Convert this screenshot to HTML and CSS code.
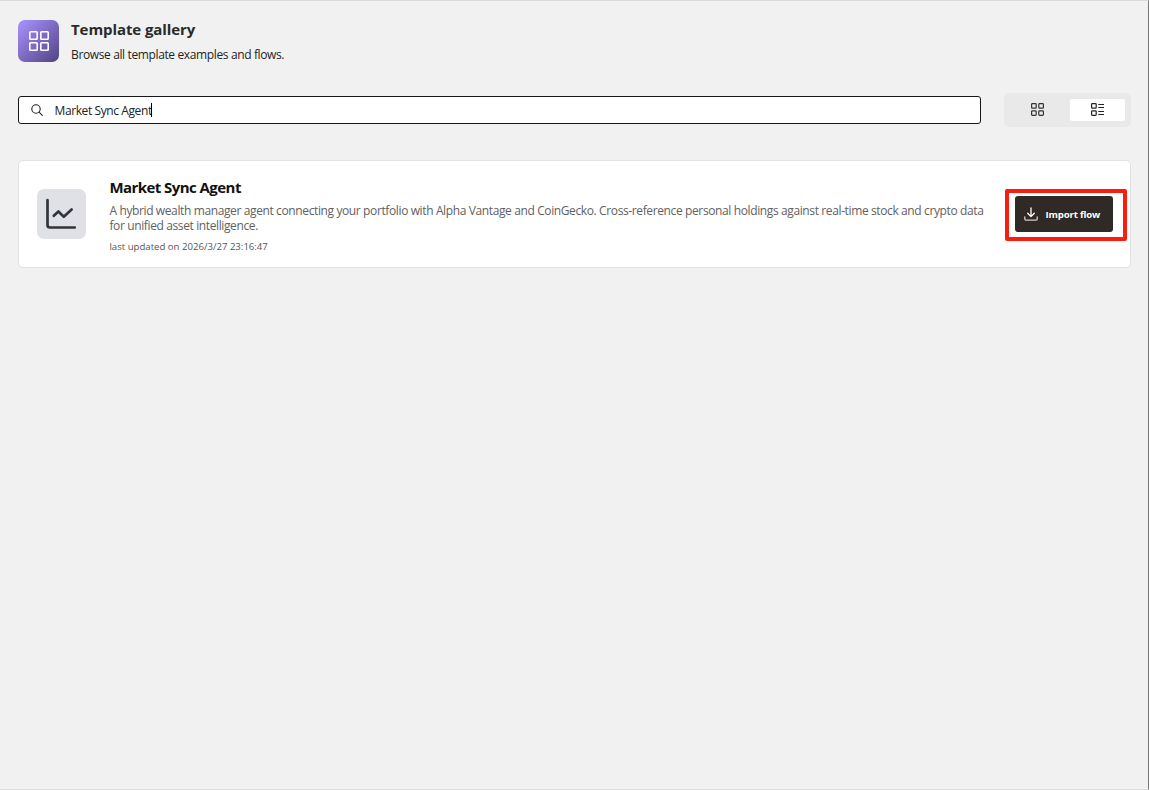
FILE: index.html
```html
<!DOCTYPE html>
<html lang="en">
<head>
    <meta charset="UTF-8">
    <meta name="viewport" content="width=device-width, initial-scale=1.0">
    <title>Template gallery</title>
    <link rel="stylesheet" href="styles.css">
</head>
<body>
    <div class="page">
        <header class="header">
            <div class="header-icon">
                <svg width="20" height="20" viewBox="0 0 20 20" fill="none" stroke="#fff" stroke-width="1.6">
                    <rect x="0.8" y="0.8" width="7.4" height="7.4" rx="0.8"/>
                    <rect x="11.8" y="0.8" width="7.4" height="7.4" rx="0.8"/>
                    <rect x="0.8" y="11.8" width="7.4" height="7.4" rx="0.8"/>
                    <rect x="11.8" y="11.8" width="7.4" height="7.4" rx="0.8"/>
                </svg>
            </div>
            <div class="header-text">
                <h1>Template gallery</h1>
                <p>Browse all template examples and flows.</p>
            </div>
        </header>

        <div class="toolbar">
            <div class="search">
                <svg width="12" height="12" viewBox="0 0 12 12" fill="none" stroke="#222" stroke-width="1.1" stroke-linecap="round">
                    <circle cx="5" cy="5" r="4.2"/>
                    <path d="M8.1 8.1L11.3 11.3"/>
                </svg>
                <span class="search-text">Market Sync Agent</span>
                <span class="caret"></span>
            </div>
            <div class="view-toggle">
                <div class="view">
                    <svg width="13" height="13" viewBox="0 0 13 13" fill="none" stroke="#333" stroke-width="1.2">
                        <rect x="0.6" y="0.6" width="4.6" height="4.6" rx="0.8"/>
                        <rect x="7.8" y="0.6" width="4.6" height="4.6" rx="0.8"/>
                        <rect x="0.6" y="7.8" width="4.6" height="4.6" rx="0.8"/>
                        <rect x="7.8" y="7.8" width="4.6" height="4.6" rx="0.8"/>
                    </svg>
                </div>
                <div class="view active">
                    <svg width="13" height="13" viewBox="0 0 13 13" fill="none" stroke="#222" stroke-width="1.2">
                        <rect x="0.6" y="0.6" width="4.6" height="4.6" rx="0.8"/>
                        <rect x="0.6" y="7.8" width="4.6" height="4.6" rx="0.8"/>
                        <path d="M7.3 1.5H13M7.3 4.5H13M7.3 8.5H13M7.3 11.5H13"/>
                    </svg>
                </div>
            </div>
        </div>

        <div class="card">
            <div class="card-icon">
                <svg width="32" height="32" viewBox="0 0 32 32" fill="none" stroke="#30363b" stroke-width="2.7" stroke-linecap="round" stroke-linejoin="round">
                    <path d="M2.5 2.2V27Q2.5 29.5 5 29.5H29.8"/>
                    <path d="M8.8 17.8L13.4 13.5L18.8 18.8L26.6 11.5"/>
                </svg>
            </div>
            <div class="card-body">
                <h2>Market Sync Agent</h2>
                <p class="description">A hybrid wealth manager agent connecting your portfolio with Alpha Vantage and CoinGecko. Cross-reference personal holdings against real-time stock and crypto data<br>for unified asset intelligence.</p>
                <p class="updated">last updated on 2026/3/27 23:16:47</p>
            </div>
            <div class="highlight">
                <button class="import">
                    <svg width="14" height="14" viewBox="0 0 14 14" fill="none" stroke="#fff" stroke-width="1.3" stroke-linecap="round" stroke-linejoin="round">
                        <path d="M7 1V9.5M3.7 6.3L7 9.6L10.3 6.3"/>
                        <path d="M0.8 9.8V12.1Q0.8 13.2 1.9 13.2H12.1Q13.2 13.2 13.2 12.1V9.8" stroke="#ccc"/>
                    </svg>
                    <span>Import flow</span>
                </button>
            </div>
        </div>
    </div>
</body>
</html>
```
FILE: styles.css
```css
* {
    box-sizing: border-box;
}

body {
    margin: 0;
    background-color: #f1f1f1;
    color: #1f1f1f;
    font-family: "Segoe UI", "Open Sans", "Noto Sans", sans-serif;
}

h1, h2, p {
    margin: 0;
    white-space: nowrap;
}

svg {
    display: block;
    flex-shrink: 0;
}

.page {
    height: 790px;
    padding: 19px 17px 0 18px;
    border-top: 1px solid #dadada;
    border-right: 1px solid #777;
    border-bottom: 1px solid #dcdcdc;
}

.header {
    display: flex;
    gap: 12px;
    height: 42px;
}

.header-icon {
    display: flex;
    align-items: center;
    justify-content: center;
    width: 41px;
    height: 42px;
    border-radius: 7px;
    background: linear-gradient(135deg, #a18cf6 10%, #514383 100%);
}

.header-text h1 {
    font-size: 15px;
    font-weight: 700;
    line-height: 18px;
    letter-spacing: -0.08px;
    color: #2a2a2a;
}

.header-text p {
    margin-top: 7px;
    font-size: 12px;
    line-height: 20px;
    letter-spacing: -0.37px;
}

.toolbar {
    display: flex;
    gap: 23px;
    align-items: center;
    height: 34px;
    margin-top: 31px;
}

.search {
    display: flex;
    align-items: center;
    width: 963px;
    height: 28px;
    padding-left: 12px;
    border: 1px solid #15171a;
    border-radius: 3px;
    background-color: #fff;
}

.search-text {
    margin-left: 11.5px;
    padding-top: 1px;
    font-size: 12px;
    letter-spacing: -0.4px;
    color: #222;
}

.caret {
    width: 1px;
    height: 14px;
    margin-left: -0.5px;
    background-color: #000;
}

.view-toggle {
    display: flex;
    width: 127px;
    height: 34px;
    padding: 6px;
    gap: 5px;
    border-radius: 5px;
    background-color: #e9e9e9;
}

.view {
    display: flex;
    align-items: center;
    justify-content: center;
    width: 55px;
    height: 22px;
    padding-bottom: 1px;
    border-radius: 2px;
}

.view.active {
    background-color: #fff;
}

.card {
    display: flex;
    align-items: center;
    height: 108px;
    margin-top: 33px;
    padding: 0 3px 0 18px;
    border: 1px solid #e2e2e2;
    border-radius: 5px;
    background-color: #fff;
}

.card-icon {
    display: flex;
    align-items: center;
    justify-content: center;
    width: 49px;
    height: 50px;
    border-radius: 7px;
    background-color: #e0e1e6;
}

.card-body {
    width: 896px;
    margin-left: 23.5px;
    margin-right: 0.5px;
    padding-top: 2px;
}

.card-body h2 {
    font-size: 15px;
    font-weight: 700;
    line-height: 20px;
    letter-spacing: -0.56px;
    color: #111;
}

.description {
    margin-top: 6px;
    font-size: 12px;
    line-height: 15px;
    letter-spacing: -0.38px;
    color: #616161;
}

.updated {
    margin-top: 7px;
    font-size: 9.6px;
    line-height: 14px;
    color: #555;
}

.highlight {
    width: 122px;
    height: 52px;
    margin-top: 2px;
    padding: 3px 6px;
    border: 4px solid #fb1c10;
    border-radius: 2px;
}

.import {
    display: flex;
    align-items: center;
    gap: 8px;
    width: 98px;
    height: 36px;
    padding: 0 8.5px;
    border: none;
    border-radius: 3px;
    background-color: #302a27;
    color: #fff;
    font-family: inherit;
    font-size: 9.6px;
    font-weight: 700;
    letter-spacing: -0.18px;
    white-space: nowrap;
}
```
